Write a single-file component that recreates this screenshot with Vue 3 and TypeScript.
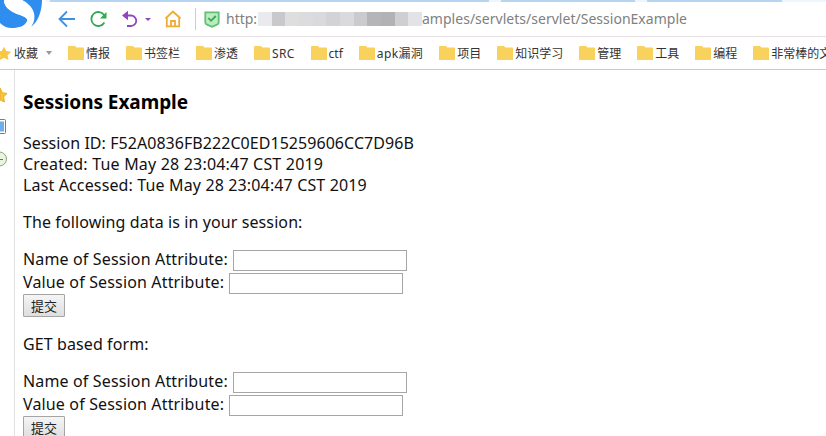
<script setup lang="ts">
interface SessionForm { id: string; title: string }
interface Folder { name: string; kind?: string }

const folders: Folder[] = [
  { name: '情报' }, { name: '书签栏' }, { name: '渗透' }, { name: 'SRC', kind: 'latin' }, { name: 'ctf' },
  { name: 'apk漏洞', kind: 'mixed' }, { name: '项目' }, { name: '知识学习' }, { name: '管理' },
  { name: '工具' }, { name: '编程' }, { name: '非常棒的文' },
]
const mosaic: string[] = ['#e9e9ee', '#c9c9cd', '#dededf', '#dcdcdf', '#dadadd', '#d3d3d5', '#dadadc', '#cbcbce', '#b5b5b8', '#b2b2b4', '#cfcfd2', '#e2e2e7']
const forms: SessionForm[] = [
  { id: 'post', title: 'The following data is in your session:' },
  { id: 'get', title: 'GET based form:' },
]
</script>

<template>
  <div class="window">
    <div class="tabs"><i class="tab first" /><i class="tab second" /><i class="tab third" /></div>
    <header class="nav">
      <svg class="logo" width="46" height="32" viewBox="0 0 46 32">
        <path d="M0 0H46V2H42C42 14 38 22 32 27C35 19 34 9 22 0Z" fill="#fff" />
        <path d="M22 0C36 7 37 19 31 27C38 22 42 11 42 0Z" fill="#2f8df0" />
        <path d="M0 0H4C4 7 10 11 17 14C24 16 28 18 27 21C25 26 19 28 12 28C7 28 3 26 0 23Z" fill="#2f8df0" />
        <path d="M4 0H22C34 8 36 17 31 27C30 19 26 17 17 14C10 11 4 7 4 0Z" fill="#fff" />
      </svg>
      <svg class="back" width="18" height="18" viewBox="0 0 18 18"><path d="M9 1.5L1.5 9L9 16.5M2 9H17" /></svg>
      <svg class="reload" width="19" height="18" viewBox="0 0 19 18"><path d="M15.4 5.5A7 7 0 1 0 15.4 12.5" /><path class="solid" d="M17.5 2V8.5H11Z" /></svg>
      <svg class="undo" width="18" height="18" viewBox="0 0 18 18"><path class="solid" d="M7 .8V10.2L1 5.5Z" /><path d="M5 5.5H10A5 5 0 0 1 10 16H6" /></svg>
      <svg class="caret" width="6" height="3" viewBox="0 0 6 3"><path d="M0 0H6L3 3Z" /></svg>
      <svg class="home" width="18" height="18" viewBox="0 0 18 18"><path d="M1.5 8.5L9 1.5L16.5 8.5M2.8 7.5V16.4H15.2V7.5M7 16V11H11V16" /></svg>
      <i class="divider" />
      <svg class="shield" width="16" height="17" viewBox="0 0 16 17"><path class="body" d="M1.3 1.3H14.7V11.5Q14.7 13 13 13.6L8 15.8L3 13.6Q1.3 13 1.3 11.5Z" /><path class="tick" d="M4.3 7L7 9.8L11.8 5" /></svg>
      <div class="url">
        <span class="scheme">http:</span>
        <span class="mask"><i v-for="(shade, i) in mosaic" :key="i" :style="{ background: shade }" /></span>
        <span class="path">amples/servlets/servlet/SessionExample</span>
      </div>
    </header>
    <nav class="bookmarks">
      <svg class="star" width="16" height="15" viewBox="0 0 16 15"><path d="M8 .7L10.2 5.1L15.2 5.8L11.6 9.2L12.4 14.1L8 11.8L3.6 14.1L4.4 9.2L.8 5.8L5.8 5.1Z" /></svg>
      <span class="fav">收藏</span>
      <svg class="more" width="6" height="4" viewBox="0 0 6 4"><path d="M0 0H6L3 4Z" /></svg>
      <span v-for="folder in folders" :key="folder.name" class="folder" :class="folder.kind">
        <svg width="16" height="14" viewBox="0 0 16 14"><path d="M0 1Q0 0 1 0H7L8.5 1.6H15Q16 1.6 16 2.6V14H0Z" /></svg>
        <span>{{ folder.name }}</span>
      </span>
    </nav>
    <div class="body">
      <aside class="rail">
        <svg width="14" height="100" viewBox="0 0 14 100">
          <path d="M0 18L2.4 22.8L7 23.5L3.6 26.9L4.4 32L0 29.8Z" fill="#f8c533" stroke="#e9ad2b" />
          <rect x="-8" y="49.5" width="13.5" height="14" rx="1" fill="#fff" stroke="#4f83bd" />
          <rect x="-6" y="51.5" width="10" height="10" fill="#70aeea" />
          <circle cx="-.5" cy="89" r="7" fill="#e9f5df" stroke="#8aa77b" />
          <path d="M0 89.5H3" stroke="#5c8050" />
        </svg>
      </aside>
      <main class="page">
        <h3>Sessions Example</h3>
        <div class="info">
          <div><span class="sid">Session ID: F52A0836FB222C0ED15259606CC7D96B</span></div>
          <div><span class="created">Created: Tue May 28 23:04:47 CST 2019</span></div>
          <div><span class="accessed">Last Accessed: Tue May 28 23:04:47 CST 2019</span></div>
        </div>
        <section v-for="form in forms" :key="form.id">
          <p>{{ form.title }}</p>
          <form @submit.prevent>
            <label><span class="name">Name of Session Attribute:</span><input type="text" /></label>
            <label><span class="value">Value of Session Attribute:</span><input type="text" /></label>
            <button type="submit">提交</button>
          </form>
        </section>
      </main>
    </div>
  </div>
</template>

<style>
body { margin: 0; overflow: hidden; background: #fff; }
</style>
<style scoped>
* { box-sizing: border-box; }
svg { display: block; flex: none; }
.window { width: 826px; height: 436px; overflow: hidden; display: flex; flex-direction: column; background: #fff; font-family: "Noto Sans", "Noto Sans CJK SC", sans-serif; white-space: nowrap; }
.tabs { height: 2px; display: flex; gap: 12px; background: #edf5fd; flex: none; padding-left: 50px; }
.tab { height: 2px; background: #b5d5f3; }
.first { width: 439px; }
.second { width: 134px; }
.third { width: 135px; }
.nav { position: relative; height: 35px; flex: none; display: flex; align-items: center; padding-left: 58px; border-bottom: 1px solid #e8e2e6; }
.logo { position: absolute; left: 0; top: -2px; }
.nav svg { fill: none; stroke-width: 1.8; }
.back { stroke: #3c91e5; }
.reload { stroke: #34a853; margin-left: 13px; stroke-width: 2.2; }
.reload .solid { fill: #34a853; stroke: none; }
.undo { stroke: #9146be; margin-left: 13px; }
.undo .solid { fill: #9146be; stroke: none; }
.nav .caret { fill: #9146be; margin-left: 6px; }
.home { stroke: #f0ab37; margin-left: 13px; }
.divider { width: 1px; height: 22px; background: #ccc; margin-left: 13px; }
.shield { margin-left: 8px; }
.shield .body { fill: #b9edc1; stroke: #64bf75; }
.shield .tick { stroke: #39a653; }
.url { display: flex; align-items: center; margin-left: 6px; color: #808080; font-size: 14px; line-height: 20px; }
.scheme { width: 32px; }
.mask { display: flex; width: 164px; height: 14px; }
.mask i { flex: 1; }
.path { letter-spacing: .02px; }
.bookmarks { height: 33px; flex: none; display: flex; align-items: center; border-bottom: 1px solid #c9c9cb; font-size: 12px; color: #333; line-height: 16px; }
.bookmarks span { position: static; }
.fav, .folder > span { padding-top: 2px; }
.star { margin-left: -4px; fill: #f8c740; }
.fav { margin-left: 2px; }
.more { fill: #999; margin: 0 16px 0 8px; }
.folder { display: flex; align-items: center; gap: 2px; margin-right: 16px; flex: none; }
.latin { letter-spacing: .3px; }
.mixed { letter-spacing: .35px; }
.folder svg { fill: #f8d25c; }
.body { flex: 1; min-height: 0; display: flex; }
.rail { width: 15px; border-right: 1px solid #e2e2e4; flex: none; }
.page { padding: 19px 0 0 8px; font-size: 16px; line-height: 21px; color: #111; }
h3 { font-size: 19px; line-height: 26px; margin: 0 0 18px; color: #000; letter-spacing: -.05px; }
.info { margin-bottom: 16px; }
.sid { letter-spacing: .05px; }
.created { letter-spacing: .19px; }
.accessed { letter-spacing: .14px; }
p { margin: 0 0 16px; letter-spacing: .1px; }
form { margin: 0 0 16px; }
label { display: flex; height: 23px; align-items: flex-start; letter-spacing: .15px; }
input { width: 174px; height: 21px; margin: 1px 0 0 5px; padding: 0; border: 1px solid #a6a6a6; background: #fff; }
button { display: block; width: 42px; height: 23px; margin: -1px 0 17px; padding: 0; border: 1px solid #a5a5a5; border-radius: 1px; background: linear-gradient(#f5f5f5, #dedede); font: 13px/19px "Noto Sans CJK SC", sans-serif; color: #222; }
</style>
